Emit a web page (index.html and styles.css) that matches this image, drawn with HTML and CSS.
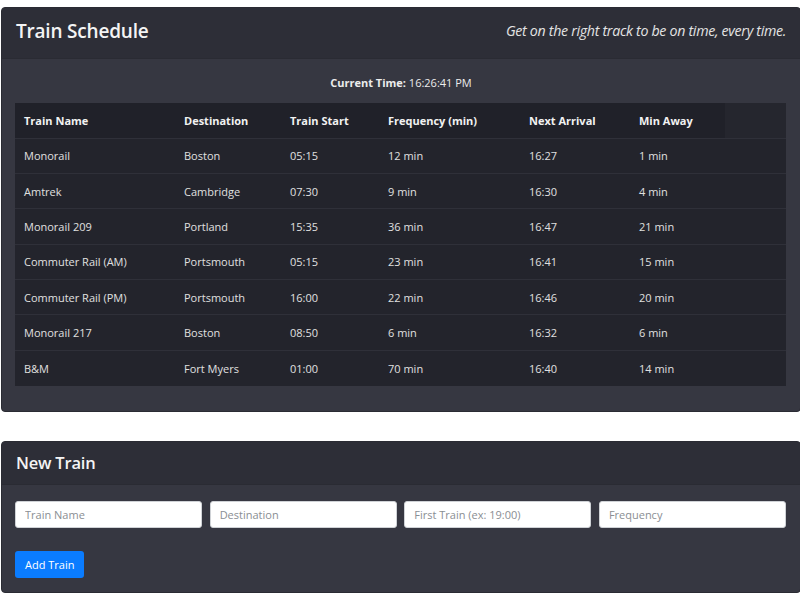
FILE: index.html
```html
<!DOCTYPE html>
<html>
<head>
<meta charset="utf-8">
<link rel="stylesheet" href="styles.css">
</head>
<body>
<div class="card schedule">
  <div class="card-header">
    <h1 class="title">Train Schedule</h1>
    <p class="tagline">Get on the right track to be on time, every time.</p>
  </div>
  <div class="card-body">
    <p class="clock"><b>Current Time:</b> 16:26:41 PM</p>
    <table class="trains">
      <thead>
        <tr><th>Train Name</th><th>Destination</th><th>Train Start</th><th>Frequency (min)</th><th>Next Arrival</th><th>Min Away</th><th class="spare"></th></tr>
      </thead>
      <tbody>
        <tr><td>Monorail</td><td>Boston</td><td>05:15</td><td>12 min</td><td>16:27</td><td>1 min</td><td></td></tr>
        <tr><td>Amtrek</td><td>Cambridge</td><td>07:30</td><td>9 min</td><td>16:30</td><td>4 min</td><td></td></tr>
        <tr><td>Monorail 209</td><td>Portland</td><td>15:35</td><td>36 min</td><td>16:47</td><td>21 min</td><td></td></tr>
        <tr><td>Commuter Rail (AM)</td><td>Portsmouth</td><td>05:15</td><td>23 min</td><td>16:41</td><td>15 min</td><td></td></tr>
        <tr><td>Commuter Rail (PM)</td><td>Portsmouth</td><td>16:00</td><td>22 min</td><td>16:46</td><td>20 min</td><td></td></tr>
        <tr><td>Monorail 217</td><td>Boston</td><td>08:50</td><td>6 min</td><td>16:32</td><td>6 min</td><td></td></tr>
        <tr><td>B&amp;M</td><td>Fort Myers</td><td>01:00</td><td>70 min</td><td>16:40</td><td>14 min</td><td></td></tr>
      </tbody>
    </table>
  </div>
</div>

<div class="card new-train">
  <div class="card-header">
    <h2 class="title">New Train</h2>
  </div>
  <div class="card-body">
    <form class="train-form">
      <div class="fields">
        <input class="field" type="text" placeholder="Train Name">
        <input class="field" type="text" placeholder="Destination">
        <input class="field" type="text" placeholder="First Train (ex: 19:00)">
        <input class="field" type="text" placeholder="Frequency">
      </div>
      <button class="btn" type="button">Add Train</button>
    </form>
  </div>
</div>
</body>
</html>
```
FILE: styles.css
```css
* { box-sizing: border-box; }
html, body { margin: 0; padding: 0; background: #fff; }
body {
  font-family: "Open Sans", "Noto Sans", sans-serif;
  color: #ececec;
  padding-top: 7px;
}
.card {
  margin-left: 1px;
  width: 800px;
  background: #363741;
  border: 1px solid #2a2b33;
  border-radius: 4px;
  overflow: hidden;
}
.card-header {
  display: flex;
  justify-content: space-between;
  align-items: center;
  background: #2d2e37;
  border-bottom: 1px solid #2a2b33;
  padding: 0 14px 0 14px;
}
.schedule .card-header { height: 51px; padding-bottom: 5px; }
.new-train .card-header { height: 43px; padding-bottom: 1px; }
.title {
  margin: 0;
  font-size: 19px;
  font-weight: 600;
  color: #f4f4f4;
  letter-spacing: -0.2px;
}
.new-train .title { font-size: 16.5px; }
.tagline {
  margin: 0;
  font-style: italic;
  font-size: 14.2px;
  color: #e4e4e4;
  letter-spacing: -0.3px;
}
.schedule .card-body { padding: 16px 13px 25px 13px; }
.clock {
  margin: 0 0 12px 0;
  text-align: center;
  font-size: 11px;
  line-height: 16px;
}
.clock b { font-weight: 700; }
.trains {
  width: 771px;
  border-collapse: collapse;
  background: #23242c;
  font-size: 11px;
}
.trains th, .trains td {
  text-align: left;
  padding: 0 0 0 9px;
  height: 35.4px;
  border-top: 1px solid #2f3039;
  white-space: nowrap;
}
.trains th { font-weight: 700; height: 35px; border-top: none; background: #202129; color: #f2f2f2; }
.trains th.spare { background: #25262e; }
.trains td { color: #e0e0e0; }
.trains th:nth-child(1) { width: 160px; }
.trains th:nth-child(2) { width: 106px; }
.trains th:nth-child(3) { width: 98px; }
.trains th:nth-child(4) { width: 141px; }
.trains th:nth-child(5) { width: 110px; }
.trains th:nth-child(6) { width: 95px; }
.new-train { margin-top: 29px; }
.new-train .card-body { padding: 16px 13px 14px 13px; }
.fields {
  display: grid;
  grid-template-columns: repeat(4, 1fr);
  gap: 7.5px;
  width: 771px;
}
.field {
  height: 27px;
  border: 1px solid #cfd2d6;
  border-radius: 3px;
  background: #fff;
  padding: 0 9px;
  font-family: inherit;
  font-size: 11px;
  color: #333;
}
.field::placeholder { color: #8a8e93; }
.btn {
  margin-top: 23px;
  height: 27px;
  padding: 0 10px;
  background: #0a7cff;
  color: #fff;
  border: none;
  border-radius: 3px;
  font-family: inherit;
  font-size: 11px;
}
```
